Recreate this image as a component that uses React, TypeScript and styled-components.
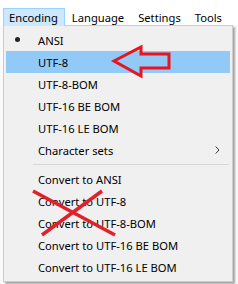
import * as React from 'react';
import styled, { createGlobalStyle } from 'styled-components';

const GlobalStyle = createGlobalStyle`
  html, body {
    margin: 0;
    padding: 0;
    background: #ffffff;
  }
  body {
    font-family: "Noto Sans", "Open Sans", sans-serif;
  }
`;

const Page = styled.div`
  position: relative;
  width: 238px;
  height: 284px;
  overflow: hidden;
  background: #fafafa;
`;

const MenuBar = styled.div`
  display: flex;
  align-items: stretch;
  height: 25px;
  box-sizing: border-box;
  padding: 8px 0 0 3px;
  background: #ffffff;
`;

const BarItem = styled.div<{ $open?: boolean }>`
  display: flex;
  align-items: center;
  height: 18px;
  padding: 0 6px 0 5px;
  margin-right: 1px;
  box-sizing: border-box;
  font-size: 11.2px;
  color: #000;
  background: ${(p) => (p.$open ? '#cce8ff' : 'transparent')};
  border: 1px solid ${(p) => (p.$open ? '#99d1ff' : 'transparent')};
  border-bottom: none;
`;

const Dropdown = styled.div`
  width: 230px;
  margin-left: 3px;
  box-sizing: border-box;
  padding: 3px 2px;
  background: #f0f0f0;
  border: 1px solid #cccccc;
  box-shadow: 2px 2px 2px rgba(0, 0, 0, 0.35);
`;

const Item = styled.div<{ $active?: boolean }>`
  position: relative;
  display: flex;
  align-items: center;
  height: 22px;
  padding-left: 32px;
  font-size: 11.2px;
  color: #000;
  background: ${(p) => (p.$active ? '#91c9f7' : 'transparent')};
`;

const Bullet = styled.span`
  position: absolute;
  left: 9px;
  top: 8px;
  width: 5px;
  height: 5px;
  border-radius: 50%;
  background: #222;
`;

const Chevron = styled.span`
  margin-left: auto;
  margin-right: 10px;
  display: flex;
  color: #333;
`;

const Separator = styled.div`
  height: 1px;
  margin: 3px 1px 3px 27px;
  background: #d7d7d7;
`;

const Overlay = styled.svg`
  position: absolute;
  left: 0;
  top: 0;
  pointer-events: none;
`;

const encodings = ['UTF-8-BOM', 'UTF-16 BE BOM', 'UTF-16 LE BOM'];
const converts = [
  'Convert to ANSI',
  'Convert to UTF-8',
  'Convert to UTF-8-BOM',
  'Convert to UTF-16 BE BOM',
  'Convert to UTF-16 LE BOM',
];

export default function App() {
  return (
    <Page>
      <GlobalStyle />
      <MenuBar>
        <BarItem $open>Encoding</BarItem>
        <BarItem>Language</BarItem>
        <BarItem>Settings</BarItem>
        <BarItem>Tools</BarItem>
      </MenuBar>
      <Dropdown>
        <Item>
          <Bullet />
          ANSI
        </Item>
        <Item $active>UTF-8</Item>
        {encodings.map((e) => (
          <Item key={e}>{e}</Item>
        ))}
        <Item>
          Character sets
          <Chevron>
            <svg width="5" height="8" viewBox="0 0 5 8">
              <path d="M0.7 0.5 L4 4 L0.7 7.5" fill="none" stroke="#333" strokeWidth="1" />
            </svg>
          </Chevron>
        </Item>
        <Separator />
        {converts.map((c) => (
          <Item key={c}>{c}</Item>
        ))}
      </Dropdown>
      <Overlay width="238" height="284" viewBox="0 0 238 284">
        <polygon
          points="114,61 141,47 141,54 169,54 169,68 141,68 141,76"
          fill="none"
          stroke="#e8141e"
          strokeWidth="3"
          strokeLinejoin="miter"
        />
        <line x1="33" y1="191" x2="115" y2="235" stroke="#e0202a" strokeWidth="3.5" />
        <line x1="102" y1="191" x2="42" y2="235" stroke="#e0202a" strokeWidth="3.5" />
      </Overlay>
    </Page>
  );
}
